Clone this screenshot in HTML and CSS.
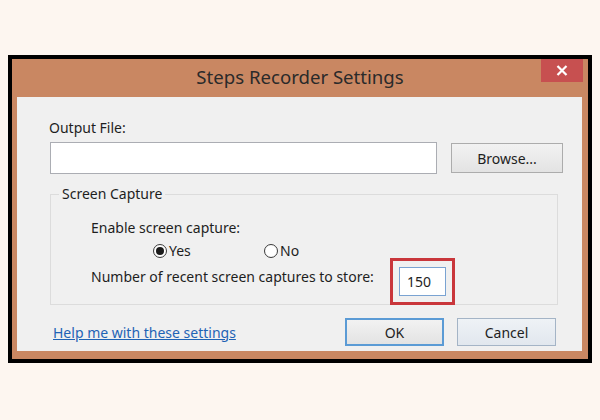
FILE: index.html
```html
<!DOCTYPE html>
<html lang="en">
<head>
  <meta charset="UTF-8" />
  <meta name="viewport" content="width=device-width, initial-scale=1.0" />
  <title>Steps Recorder Settings</title>
  <link rel="stylesheet" href="styles.css">
</head>
<body>

<!-- dialog window -->
<div class="window">
  <div class="title-bar">
    <div class="title">Steps Recorder Settings</div>
    <div class="close-btn">
      <svg width="12" height="11" viewBox="0 0 12 11">
        <path d="M1.5 1 L10.5 10 M10.5 1 L1.5 10" stroke="#fff" stroke-width="2.2" fill="none"/>
      </svg>
    </div>
  </div>

  <div class="content">
    <div class="field-label">Output File:</div>
    <div class="file-row">
      <div class="text-input file-input"></div>
      <div class="btn browse-btn">Browse...</div>
    </div>

    <fieldset class="group">
      <legend>Screen Capture</legend>
      <div class="row row-enable">Enable screen capture:</div>
      <div class="row row-radios">
        <div class="radio-item yes">
          <span class="radio checked"></span>Yes
        </div>
        <div class="radio-item">
          <span class="radio"></span>No
        </div>
      </div>
      <div class="row row-count">
        <div class="count-label">Number of recent screen captures to store:</div>
        <div class="highlight">
          <div class="count-input">150</div>
        </div>
      </div>
    </fieldset>

    <div class="bottom-row">
      <a class="help-link" href="#">Help me with these settings</a>
      <div class="buttons">
        <div class="btn ok-btn">OK</div>
        <div class="btn cancel-btn">Cancel</div>
      </div>
    </div>
  </div>
</div>

</body>
</html>
```

FILE: styles.css
```css
body {
  margin: 0;
  background: #fdf6f0;
  font-family: "Noto Sans", "Open Sans", sans-serif;
  color: #1e1e1e;
  padding: 55px 0 0 8px;
}

.window {
  width: 576px;
  border: 4px solid #000;
  background: #c98762;
}

.title-bar {
  height: 38px;
  display: grid;
  grid-template-columns: 1fr auto 1fr;
}

.title {
  grid-column: 2;
  font-size: 18.6px;
  line-height: 36px;
  color: #2a2a2a;
}

.close-btn {
  grid-column: 3;
  justify-self: end;
  margin-right: 5px;
  width: 42px;
  height: 23px;
  background: #c75050;
  display: flex;
  align-items: center;
  justify-content: center;
}

.content {
  margin: 0 6px 8px 5px;
  background: #f0f0f0;
  padding: 22px 0 5px 0;
  font-size: 14px;
}

.field-label {
  margin-left: 32px;
  line-height: 18px;
  height: 18px;
}

.file-row {
  margin: 5px 0 0 33px;
  display: flex;
  align-items: center;
  gap: 14px;
}

.text-input {
  background: #fff;
  border: 1px solid #abadb3;
  box-sizing: border-box;
}

.file-input {
  width: 387px;
  height: 32px;
}

.btn {
  box-sizing: border-box;
  display: flex;
  align-items: center;
  justify-content: center;
  background: linear-gradient(#f2f2f2, #e3e3e3);
  border: 1px solid #acacac;
}

.browse-btn {
  width: 112px;
  height: 30px;
}

.group {
  margin: 11px 0 0 33px;
  padding: 0 0 0 40px;
  width: 508px;
  box-sizing: border-box;
  border: 1px solid #dcdcdc;
  min-inline-size: 0;
}

.group legend {
  margin-left: -32px;
  padding: 0 3px;
  line-height: 18px;
}

.row {
  display: flex;
}

.row-enable {
  margin-top: 16px;
  height: 18px;
  line-height: 18px;
}

.row-radios {
  margin-top: 7px;
  height: 14px;
  line-height: 14px;
  padding-left: 62px;
}

.radio-item {
  display: flex;
  align-items: center;
  gap: 2px;
}

.radio-item.yes {
  width: 111px;
}

.radio {
  width: 14px;
  height: 14px;
  box-sizing: border-box;
  border: 1px solid #3c3c3c;
  border-radius: 50%;
  background: radial-gradient(circle, #ffffff 55%, #e8e8e8);
  display: flex;
  align-items: center;
  justify-content: center;
}

.radio.checked::after {
  content: "";
  width: 8px;
  height: 8px;
  border-radius: 50%;
  background: #1a1a1a;
}

.row-count {
  align-items: flex-start;
}

.count-label {
  width: 299px;
  margin-top: 10px;
  line-height: 18px;
}

.highlight {
  border: 3px solid #c9363b;
  padding: 6px;
  margin-bottom: -1px;
}

.count-input {
  width: 47px;
  height: 29px;
  box-sizing: border-box;
  background: #fff;
  border: 1px solid #7aa3d2;
  padding-left: 7px;
  line-height: 27px;
}

.bottom-row {
  margin-top: 13px;
  height: 28px;
  display: flex;
  align-items: center;
  justify-content: space-between;
  padding: 0 26px 0 36px;
}

.help-link {
  color: #1f63b5;
  text-decoration: underline;
}

.buttons {
  display: flex;
  gap: 13px;
}

.ok-btn,
.cancel-btn {
  width: 99px;
  height: 28px;
}

.ok-btn {
  border: 2px solid #5b9bd5;
}

.cancel-btn {
  border-color: #a4b4c6;
  background: linear-gradient(#eef2f6, #e1e7ee);
}
```
